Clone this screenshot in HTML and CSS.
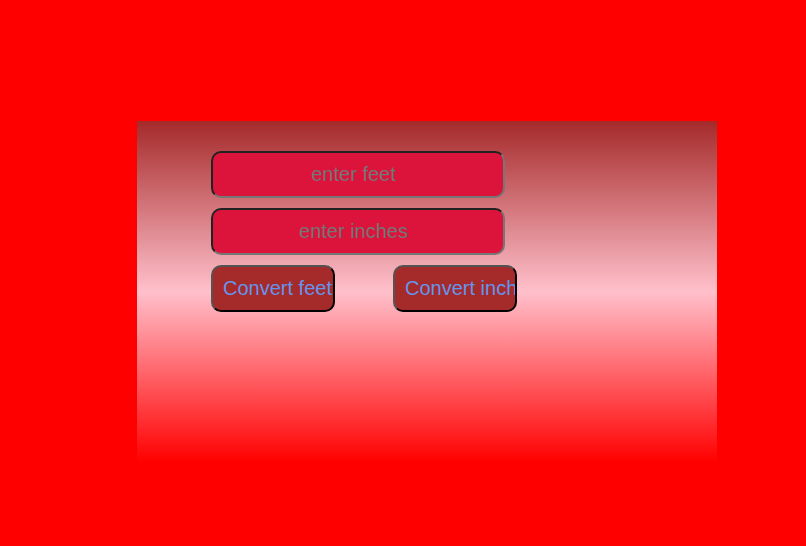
FILE: index.html
```
<!DOCTYPE html>
<html lang="en">
<head>
<meta charset="utf-8">
<title>Feet and inches converter</title>
<link rel="stylesheet" href="styles.css">
</head>
<body>
<main class="converter">
  <form class="form">
    <input class="field" type="text" placeholder="enter feet" aria-label="enter feet">
    <input class="field" type="text" placeholder="enter inches" aria-label="enter inches">
    <div class="actions">
      <input class="action" type="button" value="Convert feet">
      <input class="action" type="button" value="Convert inch">
    </div>
  </form>
</main>
</body>
</html>
```
FILE: styles.css
```
* {
  box-sizing: border-box;
}

body {
  margin: 0;
  padding: 121px 89px 0 137px;
  background: red;
  font-family: "Liberation Sans", Arial, sans-serif;
}

.converter {
  padding: 30px 74px 150px;
  background: linear-gradient(brown, pink, red);
}

.form {
  display: flex;
  flex-direction: column;
  gap: 10px;
  max-width: 294px;
}

.field,
.action {
  height: 47px;
  padding: 10px;
  border-width: 2px;
  border-radius: 10px;
  font-family: inherit;
  font-size: 20px;
}

.field {
  width: 100%;
  padding: 10px 10px 10px 1px;
  border-style: inset;
  background: crimson;
  text-align: center;
}

.actions {
  display: flex;
  gap: 58px;
}

.action {
  flex: none;
  width: 124px;
  border-style: outset;
  border-color: black;
  background: brown;
  color: cornflowerblue;
  text-align: left;
}
```
